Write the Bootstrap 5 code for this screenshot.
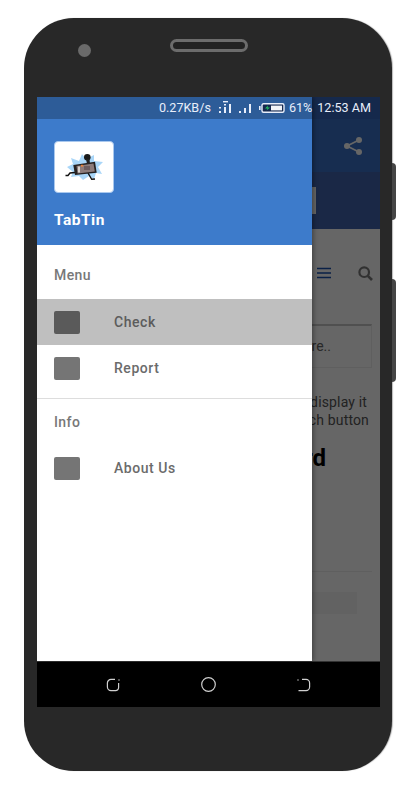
<!DOCTYPE html>
<html lang="en">
<head>
<meta charset="utf-8">
<title>TabTin</title>
<link href="https://cdn.jsdelivr.net/npm/bootstrap@5.3.0/dist/css/bootstrap.min.css" rel="stylesheet">
<style>
html,body{background:#fff;height:800px;overflow:hidden}
body{font-family:Roboto,"Liberation Sans",sans-serif}
.stage{padding:18px 25px 0 24px}
.phone{height:753px;background:#282828;border-radius:50px;box-shadow:1px 0 1px #bbb}
.phone-btn{right:-4px;width:4px;background:#454545;border-radius:0 4px 4px 0}
.btn-a{top:145px;height:57px}
.btn-b{top:261px;height:103px}
.bezel-top{height:79px;padding:21px 0 0 54px;gap:79px}
.cam{width:13px;height:13px;margin-top:5px;background:#6a6a6a;border-radius:50%}
.speaker{width:78px;height:13px;border:3px solid #6c6c6c;border-radius:7px;background:#222}
.screen{margin:0 12px 0 13px;height:610px;overflow:hidden}
.under{height:564px;background:#fff}
.status-back{height:22px;background:#4a89ff}
.appbar{height:53px;background:#3a70c8;padding-right:17px}
.tabbar{height:57px;background:#4164af}
.tab-pill{width:5px;height:27px;margin-left:274px;background:#fff}
.tools{margin:36px 7px 0 0;height:16px;gap:27px}
.fake-input{height:44px;margin:43px 8px 0 8px;border:1px solid #eee;border-top:2px solid #c8c8c8;padding-right:40px;line-height:40px;font-size:14px;color:#666;text-align:right}
.para{margin:25px 11px 0 0;font-size:14px;line-height:18px;color:#555;text-align:right;letter-spacing:.15px}
.para span{margin-right:2px}
.big{margin:14px 54px 0 0;font-size:24px;line-height:30px;font-weight:700;color:#000;text-align:right}
.rule{height:1px;margin:98px 8px 0;background:#eee}
.foot-bar{height:22px;margin:20px 23px 0 20px;background:#f5f5f5}
.scrim{inset:0 0 46px 0;background:rgba(0,0,0,.6)}
.drawer{left:0;top:0;bottom:46px;width:274.5px;background:#fff;box-shadow:2px 0 4px rgba(0,0,0,.3)}
.drawer-head{height:148px;background:#3d7bcb;padding:44px 0 0 17px}
.logo-box{width:60px;height:52px;background:#fff;border:1px solid #a9c8ee;border-radius:4px}
.brand{margin-top:17px;font-size:15.5px;line-height:20px;font-weight:700;color:#fff;letter-spacing:.5px}
.sect{height:31px;margin:15px 0 8px;padding-left:17px;font-size:14px;line-height:31px;font-weight:500;color:#787878;letter-spacing:.4px}
.sect-2{margin:8px 0 7px}
.item{height:46px;padding-left:17px;gap:34px;font-size:14px;font-weight:500;color:#6b6b6b;letter-spacing:.55px}
.item-on{background:#bfbfbf;color:#5c5c5c}
.sq{width:26px;height:23px;border-radius:2px;background:#757575}
.item-on .sq{background:#5a5a5a}
.sep{height:1px;margin-top:7px;background:#ddd}
.status{left:0;right:0;top:0;height:22px;background:rgba(0,0,0,.25);padding-right:9px;font-size:12.6px;line-height:22px;color:#e8eefa}
.clock{margin-left:5px}
.navi{height:46px;background:#000;gap:81px;border-top:1px solid #333}
</style>
</head>
<body>
<div class="stage">
  <div class="phone position-relative">
    <div class="phone-btn btn-a position-absolute"></div>
    <div class="phone-btn btn-b position-absolute"></div>
    <div class="bezel-top d-flex align-items-start">
      <div class="cam"></div>
      <div class="speaker"></div>
    </div>
    <div class="screen position-relative">
      <div class="under">
        <div class="status-back"></div>
        <div class="appbar d-flex align-items-center justify-content-end">
          <svg width="20" height="20" viewBox="0 0 20 20" fill="#fff" stroke="#fff" stroke-width="1.8"><circle cx="4" cy="10" r="3" stroke="none"/><circle cx="16" cy="4" r="3" stroke="none"/><circle cx="16" cy="16" r="3" stroke="none"/><path d="M4 10 16 4M4 10 16 16" fill="none"/></svg>
        </div>
        <div class="tabbar d-flex align-items-center"><div class="tab-pill"></div></div>
        <div class="tools d-flex justify-content-end align-items-center">
          <svg width="14" height="12" viewBox="0 0 14 12" stroke="#1a50b0" stroke-width="1.6"><path d="M0 1.5H14M0 6H14M0 10.5H14"/></svg>
          <svg width="15" height="15" viewBox="0 0 15 15" fill="none" stroke="#7c7c7c" stroke-width="2.2"><circle cx="6.2" cy="6.2" r="4.8"/><path d="M9.8 9.8 14 14" stroke-width="2.6"/></svg>
        </div>
        <div class="fake-input">Search here..</div>
        <div class="para"><span>to display it</span><br>search button</div>
        <div class="big">Word</div>
        <div class="rule"></div>
        <div class="foot-bar"></div>
      </div>
      <div class="scrim position-absolute"></div>
      <nav class="drawer position-absolute">
        <div class="drawer-head">
          <div class="logo-box">
            <svg width="58" height="50" viewBox="1 1 58 50">
              <polygon points="13,26 19,23 17,17 25,20 28,13 32,18 40,14 40,20 49,21 44,26 48,33 42,32 40,38 35,35 29,39 25,35 17,36 19,31" fill="#a9d6f8"/>
              <path d="M21 31.5 16 32 14 34.5 11.5 34.5M34 32 37.7 38.3 41 38" fill="none" stroke="#111" stroke-width="1.4"/>
              <circle cx="33.3" cy="16.3" r="3.3" fill="#1a1a1a"/><path d="M32 18H35.5L36 23H33Z" fill="#222"/>
              <polygon points="19.3,24 41,20.7 42.7,31.7 21,34" fill="#262222"/>
              <polygon points="22.5,25 39.5,22.6 40.8,30.4 23.5,32.4" fill="#8d7c7b"/>
              <rect x="24" y="25.5" width="2" height="6" fill="#d9d4d0"/>
              <rect x="27" y="23.8" width="2.2" height="1.8" fill="#e8833a"/><rect x="30" y="25" width="6" height="4" fill="#6d5c5e"/>
            </svg>
          </div>
          <div class="brand">TabTin</div>
        </div>
        <div class="sect">Menu</div>
        <div class="item item-on d-flex align-items-center"><span class="sq"></span><span>Check</span></div>
        <div class="item d-flex align-items-center"><span class="sq"></span><span>Report</span></div>
        <div class="sep"></div>
        <div class="sect sect-2">Info</div>
        <div class="item d-flex align-items-center"><span class="sq"></span><span>About Us</span></div>
      </nav>
      <div class="status position-absolute d-flex align-items-center justify-content-end">
        <span>0.27KB/s</span>
        <svg class="ms-2" width="12" height="14" viewBox="0 0 12 14" fill="#e8eefa"><rect x="4" y="0" width="5" height="1.4"/><rect x="0" y="10" width="2" height="2"/><rect x="0" y="6" width="2" height="1.5"/><rect x="5" y="6" width="2" height="6"/><rect x="5" y="3" width="2" height="1.5"/><rect x="10" y="3" width="2" height="9"/></svg>
        <svg class="ms-2" width="12" height="10" viewBox="0 0 12 10" fill="#e8eefa"><rect x="0" y="8" width="2" height="2"/><rect x="5" y="5" width="2" height="5"/><rect x="10" y="1" width="2" height="9"/></svg>
        <svg class="ms-2" width="26" height="10" viewBox="0 0 26 10"><rect x="0" y="3" width="1.6" height="4" fill="#e8eefa"/><rect x="3" y=".8" width="22" height="8.4" rx="1.5" fill="#16294f" stroke="#e8eefa" stroke-width="1.4"/><rect x="5" y="2.6" width="7" height="4.8" fill="#16294f"/><path d="M9 2.6 6 5.5H8.5L7.5 7.4 11 4.4H8.6Z" fill="#22c55e"/><rect x="12" y="2.6" width="11" height="4.8" fill="#f2f4f8"/></svg>
        <span class="ms-1">61%</span>
        <span class="clock">12:53 AM</span>
      </div>
      <div class="navi d-flex align-items-center justify-content-center">
        <svg width="14" height="14" viewBox="0 0 14 14" fill="none" stroke="#d0d0d0" stroke-width="1.2"><path d="M9 1.4H5A3.6 3.6 0 0 0 1.4 5V9A3.6 3.6 0 0 0 5 12.6H9.5A3 3 0 0 0 12.6 9.5V5"/><circle cx="13" cy="2" r=".7" fill="#d0d0d0" stroke="none"/></svg>
        <svg width="15" height="15" viewBox="0 0 15 15" fill="none" stroke="#d0d0d0" stroke-width="1.2"><circle cx="7.5" cy="7.5" r="6.8"/></svg>
        <svg width="14" height="14" viewBox="0 0 14 14" fill="none" stroke="#d0d0d0" stroke-width="1.2"><path d="M5 1.4H9A3.6 3.6 0 0 1 12.6 5V9A3.6 3.6 0 0 1 9 12.6H1.5"/><circle cx="1" cy="2" r=".7" fill="#d0d0d0" stroke="none"/></svg>
      </div>
    </div>
  </div>
</div>
</body>
</html>
